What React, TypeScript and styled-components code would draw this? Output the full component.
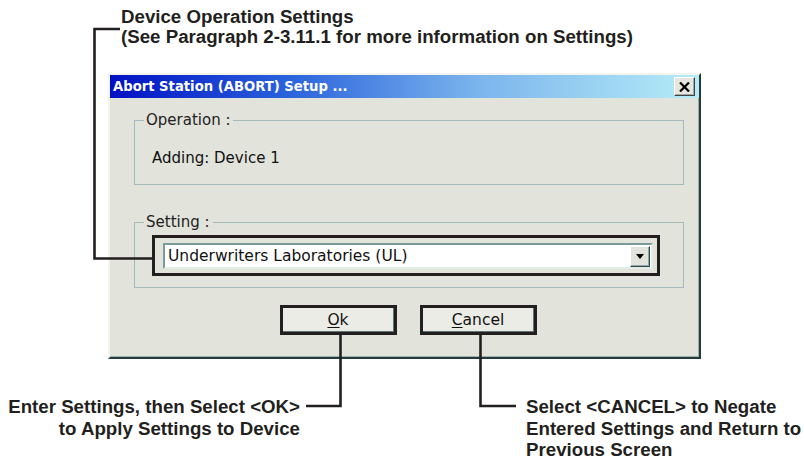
import React from "react";
import styled, { createGlobalStyle } from "styled-components";

const GlobalStyle = createGlobalStyle`
  html, body { margin: 0; padding: 0; background: #ffffff; }
  body { font-family: "Liberation Sans", Arial, sans-serif; }
`;

const INK = "#231f20";

const Figure = styled.div`
  position: relative;
  width: 804px;
  height: 460px;
  overflow: hidden;
  background: #ffffff;
`;

const Caption = styled.div<{ $align?: "left" | "right" }>`
  font-family: "Liberation Sans", Arial, sans-serif;
  font-weight: bold;
  font-size: 18.7px;
  line-height: 21.5px;
  color: ${INK};
  text-align: ${(p) => p.$align ?? "left"};
  white-space: nowrap;
`;

const TopCaption = styled(Caption)`
  padding: 7px 0 0 121px;
  line-height: 19.5px;
`;

const Dialog = styled.div`
  box-sizing: border-box;
  width: 593px;
  margin: 27px 0 0 108px;
  border: 2px solid;
  border-color: #f4f4ef #233b3b #233b3b #f4f4ef;
  box-shadow: inset -1px -1px 0 #9fb2b2;
  background: #e2e3db;
  font-family: "DejaVu Sans", Verdana, sans-serif;
  font-size: 15px;
  color: #111;
`;

const TitleBar = styled.div`
  height: 23px;
  display: flex;
  align-items: center;
  justify-content: space-between;
  padding: 0 4px 0 3px;
  background: linear-gradient(
    to right,
    #0010c4 0%,
    #2a62dc 30%,
    #7ab4ec 62%,
    #b6ecf8 100%
  );
`;

const Title = styled.span`
  font-family: "DejaVu Sans", Verdana, sans-serif;
  font-weight: bold;
  font-size: 13.2px;
  color: #ffffff;
`;

const CloseButton = styled.div`
  box-sizing: border-box;
  width: 21px;
  height: 19px;
  display: flex;
  align-items: center;
  justify-content: center;
  background: #e6e6df;
  border: 1px solid;
  border-color: #ffffff #3c4444 #3c4444 #ffffff;
  box-shadow: inset -1px -1px 0 #a0a8a8;
`;

const Body = styled.div`
  padding: 14px 15px 22px 24px;
  display: flex;
  flex-direction: column;
`;

const Group = styled.fieldset<{ $gap?: number }>`
  margin: ${(p) => p.$gap ?? 0}px 0 0 0;
  border: 1px solid #a3baba;
  padding: 0;
  min-width: 0;
`;

const Legend = styled.legend`
  margin-left: 9px;
  padding: 0 3px 0 2px;
  font-size: 15px;
  line-height: 16px;
  color: #222;
`;

const InfoText = styled.div`
  padding: 21px 0 17px 17px;
  font-size: 15px;
  line-height: 18px;
`;

const Callout = styled.div`
  border: 3px solid ${INK};
  box-sizing: border-box;
`;

const ComboCallout = styled(Callout)`
  margin: 5px 23px 11px 17px;
  padding: 5px 4px 4px 8px;
`;

const Combo = styled.div`
  box-sizing: border-box;
  height: 26px;
  display: flex;
  align-items: center;
  background: #ffffff;
  border: 2px solid;
  border-color: #7b9a9a #e4ece8 #e4ece8 #7b9a9a;
  padding: 1px;
`;

const ComboText = styled.span`
  flex: 1;
  padding-left: 2px;
  font-size: 15.5px;
  color: #111;
`;

const DropButton = styled.div`
  box-sizing: border-box;
  width: 20px;
  height: 21px;
  display: flex;
  align-items: center;
  justify-content: center;
  background: #e2e3db;
  border: 1px solid;
  border-color: #ffffff #2f4a4a #2f4a4a #ffffff;
  box-shadow: inset -1px -1px 0 #93a8a8;
`;

const ButtonRow = styled.div`
  display: flex;
  gap: 23px;
  margin-top: 17px;
  padding-left: 146px;
`;

const ButtonCallout = styled(Callout)`
  width: 117px;
  height: 30px;
`;

const PushButton = styled.div`
  box-sizing: border-box;
  height: 100%;
  display: flex;
  align-items: center;
  justify-content: center;
  background: #ecece6;
  border-right: 1px solid #5e7474;
  border-bottom: 1px solid #5e7474;
  font-size: 15.5px;
  color: #111;
`;

const Mnemonic = styled.span`
  text-decoration: underline;
  text-underline-offset: 2px;
`;

const BottomRow = styled.div`
  display: flex;
  margin-top: 37px;
`;

const LeftNote = styled(Caption)`
  width: 300px;
`;

const RightNote = styled(Caption)`
  margin-left: 226px;
`;

const Leaders = styled.svg`
  position: absolute;
  left: 0;
  top: 0;
  pointer-events: none;
`;

export default function App() {
  return (
    <>
      <GlobalStyle />
      <Figure>
        <TopCaption>
          Device Operation Settings
          <br />
          (See Paragraph 2-3.11.1 for more information on Settings)
        </TopCaption>

        <Dialog>
          <TitleBar>
            <Title>Abort Station (ABORT) Setup ...</Title>
            <CloseButton>
              <svg width="11" height="10" viewBox="0 0 11 10">
                <path d="M1 0.5 L10 9.5 M10 0.5 L1 9.5" stroke="#000" strokeWidth="2.2" fill="none" />
              </svg>
            </CloseButton>
          </TitleBar>
          <Body>
            <Group>
              <Legend>Operation :</Legend>
              <InfoText>Adding: Device 1</InfoText>
            </Group>
            <Group $gap={29}>
              <Legend>Setting :</Legend>
              <ComboCallout>
                <Combo>
                  <ComboText>Underwriters Laboratories (UL)</ComboText>
                  <DropButton>
                    <svg width="8" height="5" viewBox="0 0 8 5">
                      <path d="M0 0 H8 L4 5 Z" fill="#000" />
                    </svg>
                  </DropButton>
                </Combo>
              </ComboCallout>
            </Group>
            <ButtonRow>
              <ButtonCallout>
                <PushButton>
                  <span>
                    <Mnemonic>O</Mnemonic>k
                  </span>
                </PushButton>
              </ButtonCallout>
              <ButtonCallout>
                <PushButton>
                  <span>
                    <Mnemonic>C</Mnemonic>ancel
                  </span>
                </PushButton>
              </ButtonCallout>
            </ButtonRow>
          </Body>
        </Dialog>

        <BottomRow>
          <LeftNote $align="right">
            Enter Settings, then Select &lt;OK&gt;
            <br />
            to Apply Settings to Device
          </LeftNote>
          <RightNote>
            Select &lt;CANCEL&gt; to Negate
            <br />
            Entered Settings and Return to
            <br />
            Previous Screen
          </RightNote>
        </BottomRow>

        <Leaders width="804" height="460" viewBox="0 0 804 460">
          <g stroke={INK} strokeWidth="2.6" fill="none" strokeLinejoin="miter">
            <path d="M120 29 H94.5 V258.5 H153" />
            <path d="M340.5 335 V406 H306" />
            <path d="M480.5 335 V406 H516" />
          </g>
        </Leaders>
      </Figure>
    </>
  );
}
